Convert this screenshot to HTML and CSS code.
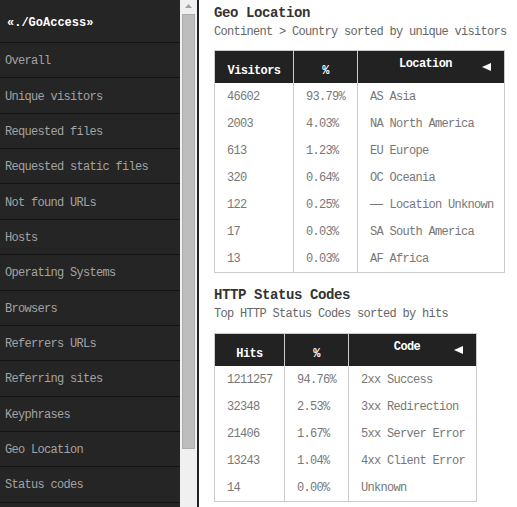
FILE: index.html
```html
<!DOCTYPE html>
<html lang="en">
<head>
<meta charset="utf-8">
<title>GoAccess</title>
<link rel="stylesheet" href="styles.css">
</head>
<body>
<div class="page">
  <nav class="sidebar">
    <div class="brand">«./GoAccess»</div>
    <ul class="menu">
      <li class="menu-item">Overall</li>
      <li class="menu-item">Unique visitors</li>
      <li class="menu-item">Requested files</li>
      <li class="menu-item">Requested static files</li>
      <li class="menu-item">Not found URLs</li>
      <li class="menu-item">Hosts</li>
      <li class="menu-item">Operating Systems</li>
      <li class="menu-item">Browsers</li>
      <li class="menu-item">Referrers URLs</li>
      <li class="menu-item">Referring sites</li>
      <li class="menu-item">Keyphrases</li>
      <li class="menu-item">Geo Location</li>
      <li class="menu-item">Status codes</li>
    </ul>
  </nav>
  <div class="scrollbar">
    <div class="scroll-up"><svg width="7" height="4" viewBox="0 0 7 4"><polygon points="3.5,0 7,4 0,4" fill="#a3a3a3"/></svg></div>
    <div class="scroll-thumb"></div>
  </div>
  <div class="divider"></div>
  <main class="content">
    <section class="panel">
      <h2 class="panel-title">Geo Location</h2>
      <p class="panel-desc">Continent &gt; Country sorted by unique visitors</p>
      <table class="data geo">
        <thead>
          <tr>
            <th class="c1"><span class="lbl">Visitors</span></th>
            <th class="c2"><span class="lbl">%</span></th>
            <th class="c3 sorted"><div class="sort-wrap"><span class="lbl">Location</span><svg class="arrow" width="9" height="8" viewBox="0 0 9 8"><polygon points="0,4 9,0 9,8" fill="#fff"/></svg></div></th>
          </tr>
        </thead>
        <tbody>
          <tr><td>46602</td><td>93.79%</td><td>AS Asia</td></tr>
          <tr><td>2003</td><td>4.03%</td><td>NA North America</td></tr>
          <tr><td>613</td><td>1.23%</td><td>EU Europe</td></tr>
          <tr><td>320</td><td>0.64%</td><td>OC Oceania</td></tr>
          <tr><td>122</td><td>0.25%</td><td><span class="dash">—</span> Location Unknown</td></tr>
          <tr><td>17</td><td>0.03%</td><td>SA South America</td></tr>
          <tr><td>13</td><td>0.03%</td><td>AF Africa</td></tr>
        </tbody>
      </table>
    </section>
    <section class="panel">
      <h2 class="panel-title">HTTP Status Codes</h2>
      <p class="panel-desc">Top HTTP Status Codes sorted by hits</p>
      <table class="data status">
        <thead>
          <tr>
            <th class="c1"><span class="lbl">Hits</span></th>
            <th class="c2"><span class="lbl">%</span></th>
            <th class="c3 sorted"><div class="sort-wrap"><span class="lbl">Code</span><svg class="arrow" width="9" height="8" viewBox="0 0 9 8"><polygon points="0,4 9,0 9,8" fill="#fff"/></svg></div></th>
          </tr>
        </thead>
        <tbody>
          <tr><td>1211257</td><td>94.76%</td><td>2xx Success</td></tr>
          <tr><td>32348</td><td>2.53%</td><td>3xx Redirection</td></tr>
          <tr><td>21406</td><td>1.67%</td><td>5xx Server Error</td></tr>
          <tr><td>13243</td><td>1.04%</td><td>4xx Client Error</td></tr>
          <tr><td>14</td><td>0.00%</td><td>Unknown</td></tr>
        </tbody>
      </table>
    </section>
  </main>
</div>
</body>
</html>
```

FILE: styles.css
```css
* { box-sizing: border-box; }

html, body {
  margin: 0;
  padding: 0;
  height: 100%;
}

body {
  font-family: "Liberation Mono", "DejaVu Sans Mono", monospace;
  font-size: 12px;
  letter-spacing: -0.7px;
  background: #fff;
  overflow: hidden;
}

.page {
  display: flex;
  height: 507px;
}

/* Sidebar */
.sidebar {
  width: 180px;
  flex: none;
  background: #252525;
  overflow: hidden;
}

.brand {
  height: 43px;
  border-bottom: 1px solid #131313;
  padding: 3px 0 0 7px;
  display: flex;
  align-items: center;
  color: #fff;
  font-weight: bold;
  letter-spacing: 0;
}

.menu {
  list-style: none;
  margin: 0;
  padding: 0;
}

.menu-item {
  height: 35.36px;
  border-bottom: 1px solid #131313;
  padding: 2px 0 0 5px;
  display: flex;
  align-items: center;
  color: #a3a3a3;
  white-space: nowrap;
}

/* Fake scrollbar */
.scrollbar {
  width: 17px;
  flex: none;
  background: #f0f0f0;
  display: flex;
  flex-direction: column;
  align-items: center;
}

.scroll-up {
  height: 14px;
  display: flex;
  align-items: center;
  justify-content: center;
  padding-bottom: 2px;
}

.scroll-up svg { display: block; }

.scroll-thumb {
  width: 13px;
  height: 435px;
  background: #bdbdbd;
  border: 1px solid #adadad;
}

.divider {
  width: 2px;
  flex: none;
  background: #1c2027;
}

/* Content */
.content {
  flex: 1;
  padding: 5px 0 0 15px;
  overflow: hidden;
  color: #777;
}

.panel + .panel {
  margin-top: 14px;
}

.panel-title {
  margin: 0;
  font-size: 14px;
  letter-spacing: -0.4px;
  line-height: 17px;
  font-weight: bold;
  color: #333;
}

.panel-desc {
  margin: 2px 0 0;
  line-height: 17px;
  color: #666;
  white-space: nowrap;
}

.data {
  margin-top: 9px;
  border-collapse: separate;
  border-spacing: 0;
  table-layout: fixed;
  border-top: 1px solid #ccc;
  border-right: 1px solid #ccc;
  border-bottom: 1px solid #ccc;
}

.data.geo { width: 291px; }
.data.status { width: 263px; margin-top: 10px; }

.data.geo .c1 { width: 79px; }
.data.geo .c2 { width: 64px; }
.data.geo .c3 { width: 147px; }

.data.status .c1 { width: 70px; }
.data.status .c2 { width: 64px; }
.data.status .c3 { width: 128px; }

.data th,
.data td {
  border-left: 1px solid #ccc;
  white-space: nowrap;
  overflow: hidden;
}

.data th {
  height: 32px;
  padding: 0;
  background: #222;
  color: #fff;
  font-weight: bold;
  letter-spacing: -0.6px;
  text-align: center;
  vertical-align: middle;
}

.data th .lbl {
  display: inline-block;
  padding-top: 7px;
}

.data th.sorted .lbl {
  padding-top: 0;
  padding-bottom: 6px;
}

.sort-wrap {
  display: grid;
  grid-template-columns: 1fr auto 1fr;
  align-items: center;
  padding: 0 13px 0 2px;
}

.sort-wrap .lbl {
  grid-column: 2;
}

.sort-wrap .arrow {
  grid-column: 3;
  justify-self: end;
  display: block;
}

.data td {
  height: 27px;
  padding: 2px 0 0 12px;
  line-height: 15px;
  color: #777;
  vertical-align: middle;
}

.dash {
  display: inline-block;
  width: 13px;
  transform: scaleX(1.8);
  transform-origin: left center;
}
```
